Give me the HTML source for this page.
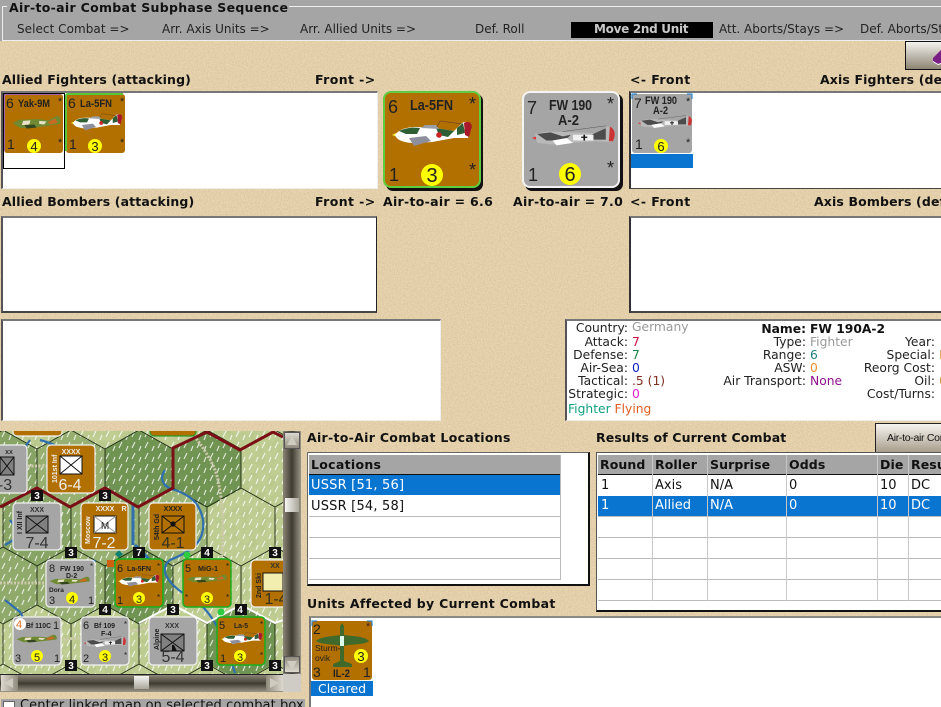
<!DOCTYPE html>
<html><head><meta charset="utf-8"><style>
html{margin:0;padding:0;background:#e3cfaa;width:941px;height:707px;overflow:hidden}
body{margin:0;padding:0;width:941px;height:707px;position:relative;overflow:hidden;font:12px "DejaVu Sans","Liberation Sans",sans-serif;color:#111}
.a{position:absolute;white-space:nowrap}
.h{position:absolute;white-space:nowrap;font:bold 12.5px/16px "DejaVu Sans",sans-serif;color:#111;letter-spacing:.13px}
.s{position:absolute;white-space:nowrap;font:12px/16px "DejaVu Sans",sans-serif;color:#222;top:21px}
.box{position:absolute;background:#fff;box-sizing:border-box;border:1px solid #eee;border-top:2px solid #777;border-left:2px solid #555}
.i{position:absolute;white-space:nowrap;font:12.3px/13px "DejaVu Sans",sans-serif;color:#222}
.r{text-align:right}
.t{position:absolute;background:#fff;overflow:hidden}
.t b,.t i{position:absolute;font:normal 13px/20px "DejaVu Sans",sans-serif;white-space:nowrap}
.t b{font:bold 12.5px/20px "DejaVu Sans",sans-serif;color:#111;letter-spacing:.1px}
svg{position:absolute;overflow:hidden}
svg text{font-family:"Liberation Sans",sans-serif}
</style></head><body>
<svg style="left:0;top:0" width="941" height="707"><filter id="n" x="0" y="0" width="100%" height="100%"><feTurbulence type="fractalNoise" baseFrequency=".7" numOctaves="3" seed="4"/><feColorMatrix values="0 0 0 0 .45  0 0 0 0 .33  0 0 0 0 .15  1.8 0 0 0 -.65"/></filter><rect width="941" height="707" fill="#e8d5b1"/><rect width="941" height="707" filter="url(#n)" opacity=".35"/>
<defs>
<symbol id="la" viewBox="0 0 81 27" preserveAspectRatio="none"><path d="M0 15l4-2 1 4z" fill="#ee3"/><path d="M3 15C7 9 15 7 25 7L44 8 62 11 70 3C76 0 81 3 79 10L76 18 62 18 40 22 20 23C10 22 5 20 3 15Z" fill="#fff"/><path d="M7 11C14 8 20 7 28 8L25 14 14 14ZM44 8L62 11 56 17 47 15ZM65 8L71 3 73 13 65 15Z" fill="#2f5f34"/><path d="M72 3C76 0 82 3 79 10L77 17 73 15Z" fill="#a8182a"/><path d="M29 8L33 5 44 5 47 9Z" fill="#9aa0a8"/><path d="M17 18L34 16 39 21 22 26Z" fill="#8d8f9c"/><circle cx="47" cy="15" r="2.8" fill="#c22"/><path d="M45 7L48 1 70 4" fill="none" stroke="#533" stroke-width=".5"/></symbol>
<symbol id="fw" viewBox="0 0 81 27" preserveAspectRatio="none"><path d="M0 16l4-2v4z" fill="#d33"/><path d="M3 11L15 8 42 9 62 10 74 2C79 2 81 8 80 15L78 21 62 20 40 22 20 24 5 22Z" fill="#b9b9b9"/><path d="M5 11L18 9 30 14 38 12 32 19 14 19ZM58 12L72 4 72 18 60 18Z" fill="#4c4c4c"/><path d="M20 19L34 16 40 22 24 25Z" fill="#fff"/><path d="M40 12H60V19H40Z" fill="#f0f0f0"/><path d="M51 12v7M48 15h6" stroke="#111" stroke-width="1.6"/><path d="M76 2C81 5 82 12 79 20L75 20Z" fill="#c33"/><path d="M30 8L72 1" stroke="#444" stroke-width=".5"/></symbol>
<symbol id="mig" viewBox="0 0 81 27" preserveAspectRatio="none"><path d="M1 14L12 8 42 7 60 9 72 2C77 1 80 8 78 15L60 18 34 22 14 22Z" fill="#6f8a32"/><path d="M18 10L30 9 28 16 16 17ZM44 10L56 11 52 16 44 15Z" fill="#e9e2c8"/><path d="M58 12L70 6 74 13 62 16Z" fill="#ca6a22"/><path d="M20 17L36 16 40 21 24 23Z" fill="#35461f"/></symbol>
<path id="hx" d="M-34-20L0-39 34-20V20L0 39-34 20Z"/>
<pattern id="tick" width="13" height="11" patternUnits="userSpaceOnUse"><path d="M2 8l3-6M9 11l2-5" stroke="#fff" stroke-width="1.1" opacity=".8"/></pattern>
<pattern id="hex" x="3" y="488" width="68" height="117" patternUnits="userSpaceOnUse"><path d="M0 19L34 0 68 19M0 19V59M68 19V59M0 59L34 78 68 59M34 78V117" fill="none" stroke="#1e2a14" stroke-width=".9"/></pattern>
<filter id="m" x="0" y="0" width="100%" height="100%"><feTurbulence type="fractalNoise" baseFrequency=".12" numOctaves="3" seed="9"/><feColorMatrix values="0 0 0 0 .25  0 0 0 0 .38  0 0 0 0 .1  1.2 0 0 0 -.45"/></filter>
</defs></svg>

<!-- top bar -->
<div class="a" style="left:0;top:0;width:941px;height:41px;background:#a5a5a5"></div>
<div class="a" style="left:2px;top:6px;width:939px;height:33px;border:1px solid #eee;border-right:0;box-sizing:content-box"></div>
<div class="a" style="left:7px;top:0;height:13px;width:282px;background:#a5a5a5"></div>
<div class="h" style="left:9px;top:0;letter-spacing:.3px">Air-to-air Combat Subphase Sequence</div>
<div class="s" style="left:17px;letter-spacing:.05px">Select Combat =&gt;</div>
<div class="s" style="left:162px">Arr. Axis Units =&gt;</div>
<div class="s" style="left:300px">Arr. Allied Units =&gt;</div>
<div class="s" style="left:475px">Def. Roll</div>
<div class="a" style="left:571px;top:22px;width:142px;height:16px;background:#000"></div>
<div class="s" style="left:594px;font-weight:bold;color:#c8c8c8;letter-spacing:-.3px">Move 2nd Unit</div>
<div class="s" style="left:719px">Att. Aborts/Stays =&gt;</div>
<div class="s" style="left:860px;width:81px;overflow:hidden">Def. Aborts/Stays</div>

<!-- top right button -->
<div class="a" style="left:905px;top:41px;width:36px;height:29px;box-sizing:border-box;background:linear-gradient(#f4f2ee,#8d8473);border:1px solid #111;border-right:0;overflow:hidden"><svg style="left:27px;top:7px" width="8" height="16"><path d="M0 9L8 1 14 4V12L5 15 0 12Z" fill="#7a1f86"/><path d="M0 12L5 15 14 12V13L5 16 0 13Z" fill="#fff"/></svg></div>

<!-- labels -->
<div class="h" style="left:2px;top:72px">Allied Fighters (attacking)</div>
<div class="h" style="left:315px;top:72px;letter-spacing:.4px">Front -&gt;</div>
<div class="h" style="left:630px;top:72px;letter-spacing:.4px">&lt;- Front</div>
<div class="h" style="left:820px;top:72px;width:121px;overflow:hidden">Axis Fighters (defending)</div>
<div class="h" style="left:2px;top:194px">Allied Bombers (attacking)</div>
<div class="h" style="left:315px;top:194px;letter-spacing:.4px">Front -&gt;</div>
<div class="h" style="left:383px;top:194px;letter-spacing:.3px">Air-to-air = 6.6</div>
<div class="h" style="left:513px;top:194px;letter-spacing:.3px">Air-to-air = 7.0</div>
<div class="h" style="left:630px;top:194px;letter-spacing:.4px">&lt;- Front</div>
<div class="h" style="left:814px;top:194px;width:127px;overflow:hidden">Axis Bombers (defending)</div>
<div class="h" style="left:307px;top:430px;letter-spacing:.3px">Air-to-Air Combat Locations</div>
<div class="h" style="left:596px;top:430px">Results of Current Combat</div>
<div class="h" style="left:307px;top:596px;letter-spacing:.3px">Units Affected by Current Combat</div>

<!-- boxes -->
<div class="box" style="left:1px;top:91px;width:377px;height:98px"></div>
<div class="box" style="left:629px;top:91px;width:312px;height:98px;border-bottom:1px solid #444;border-left:2px solid #333;border-right:0"></div>
<div class="box" style="left:1px;top:216px;width:376px;height:97px;border-right:1px solid #222;border-bottom:2px solid #444"></div>
<div class="box" style="left:629px;top:216px;width:312px;height:97px;border-bottom:2px solid #444;border-left:2px solid #333;border-right:0"></div>
<div class="box" style="left:1px;top:319px;width:440px;height:102px"></div>
<div class="box" style="left:565px;top:319px;width:376px;height:102px;border-right:0"></div>

<!-- small counter: Yak -->
<svg style="left:3px;top:93px" width="61" height="61" viewBox="0 0 61 61"><rect x="1" y="1" width="59" height="59" rx="3" fill="#b27000"/><path d="M1 58V3Q1 1 3 1H58" fill="none" stroke="#a860b0" stroke-width="2"/><text x="3" y="15" font-size="14" fill="#222">6</text><text x="15" y="14" font-size="11" font-weight="bold" textLength="32" lengthAdjust="spacingAndGlyphs" fill="#222">Yak-9M</text><text x="55" y="12" font-size="11" fill="#222">*</text><text x="55" y="53" font-size="11" fill="#222">*</text><text x="4" y="56" font-size="14" fill="#222">1</text><circle cx="31" cy="53" r="7" fill="#ff0"/><text x="31" y="58" font-size="13" text-anchor="middle" fill="#222">4</text><use href="#mig" x="9" y="22" width="50" height="16"/></svg>
<div class="a" style="left:3px;top:93px;width:60px;height:74px;border:1px solid #000;box-sizing:content-box"></div>
<!-- small La-5FN -->
<svg style="left:65px;top:93px" width="61" height="61" viewBox="0 0 61 61"><rect x="1" y="1" width="59" height="59" rx="3" fill="#b27000"/><path d="M1 58V3Q1 1 3 1H58" fill="none" stroke="#58c838" stroke-width="2"/><text x="3" y="15" font-size="14" fill="#222">6</text><text x="15" y="14" font-size="11" font-weight="bold" textLength="32" lengthAdjust="spacingAndGlyphs" fill="#222">La-5FN</text><text x="55" y="12" font-size="11" fill="#222">*</text><text x="55" y="53" font-size="11" fill="#222">*</text><text x="4" y="56" font-size="14" fill="#222">1</text><circle cx="30" cy="53" r="7" fill="#ff0"/><text x="30" y="58" font-size="13" text-anchor="middle" fill="#222">3</text><use href="#la" x="6" y="20" width="52" height="18"/></svg>

<!-- big La-5FN -->
<svg style="left:383px;top:91px" width="101" height="101" viewBox="0 0 101 101"><rect x="3" y="3" width="97" height="97" rx="7" fill="#111"/><rect x="1" y="1" width="96" height="95" rx="7" fill="#b27000" stroke="#62cc40" stroke-width="2"/><text x="5" y="22" font-size="18" fill="#222">6</text><text x="27" y="19" font-size="15" font-weight="bold" textLength="43" lengthAdjust="spacingAndGlyphs" fill="#222">La-5FN</text><text x="86" y="19" font-size="18" fill="#222">*</text><text x="86" y="85" font-size="18" fill="#222">*</text><text x="6" y="90" font-size="18" fill="#222">1</text><circle cx="49" cy="84" r="11" fill="#ff0"/><text x="49" y="91" font-size="20" text-anchor="middle" fill="#222">3</text><use href="#la" x="9" y="29" width="81" height="27"/></svg>
<!-- big FW -->
<svg style="left:521px;top:90px" width="103" height="102" viewBox="0 0 103 102"><rect x="4" y="4" width="98" height="97" rx="7" fill="#111"/><rect x="2" y="2" width="96" height="95" rx="7" fill="#a5a5a5" stroke="#f4f4f4" stroke-width="2"/><text x="6" y="24" font-size="18" fill="#222">7</text><text x="28" y="20" font-size="15" font-weight="bold" textLength="43" lengthAdjust="spacingAndGlyphs" fill="#222">FW 190</text><text x="37" y="35" font-size="15" font-weight="bold" textLength="21" lengthAdjust="spacingAndGlyphs" fill="#222">A-2</text><text x="86" y="20" font-size="18" fill="#222">*</text><text x="86" y="84" font-size="18" fill="#222">*</text><text x="7" y="91" font-size="18" fill="#222">1</text><circle cx="49" cy="84" r="11" fill="#ff0"/><text x="49" y="91" font-size="20" text-anchor="middle" fill="#222">6</text><use href="#fw" x="11" y="35" width="83" height="22"/></svg>
<!-- small FW -->
<div class="a" style="left:631px;top:153px;width:62px;height:15px;background:#0a75d1"></div>
<svg style="left:631px;top:93px" width="62" height="61" viewBox="0 0 62 61"><rect width="62" height="61" fill="#fff"/><rect x="1" y="1" width="60" height="59" rx="3" fill="#a5a5a5"/><path d="M1 6V1H6M56 1H61V6" fill="none" stroke="#0a75d1"/><text x="3" y="15" font-size="14" fill="#222">7</text><text x="14" y="11" font-size="11" font-weight="bold" textLength="32" lengthAdjust="spacingAndGlyphs" fill="#222">FW 190</text><text x="22" y="21" font-size="11" font-weight="bold" textLength="15" lengthAdjust="spacingAndGlyphs" fill="#222">A-2</text><text x="55" y="12" font-size="11" fill="#222">*</text><text x="55" y="53" font-size="11" fill="#222">*</text><text x="4" y="56" font-size="14" fill="#222">1</text><circle cx="30" cy="53" r="7" fill="#ff0"/><text x="30" y="58" font-size="13" text-anchor="middle" fill="#222">6</text><use href="#fw" x="7" y="22" width="54" height="14"/></svg>

<!-- info panel -->
<div class="i r" style="left:565px;width:63px;top:322px">Country:</div><div class="i" style="left:632px;top:321px;color:#999">Germany</div>
<div class="i r" style="left:565px;width:63px;top:336px">Attack:</div><div class="i" style="left:632px;top:336px;color:#d01040">7</div>
<div class="i r" style="left:565px;width:63px;top:349px">Defense:</div><div class="i" style="left:632px;top:349px;color:#208040">7</div>
<div class="i r" style="left:565px;width:63px;top:362px">Air-Sea:</div><div class="i" style="left:632px;top:362px;color:#1020c0">0</div>
<div class="i r" style="left:565px;width:63px;top:375px">Tactical:</div><div class="i" style="left:632px;top:375px;color:#803020">.5 (1)</div>
<div class="i r" style="left:565px;width:63px;top:388px">Strategic:</div><div class="i" style="left:632px;top:388px;color:#e020d0">0</div>
<div class="i" style="left:568px;top:403px;color:#10a080">Fighter <span style="color:#e06020">Flying</span></div>
<div class="i r" style="left:700px;width:106px;top:323px;font-weight:bold;color:#111">Name:</div><div class="i" style="left:810px;top:323px;font-weight:bold;color:#111">FW 190A-2</div>
<div class="i r" style="left:700px;width:106px;top:336px">Type:</div><div class="i" style="left:810px;top:336px;color:#999">Fighter</div>
<div class="i r" style="left:700px;width:106px;top:349px">Range:</div><div class="i" style="left:810px;top:349px;color:#208080">6</div>
<div class="i r" style="left:700px;width:106px;top:362px">ASW:</div><div class="i" style="left:810px;top:362px;color:#f09030">0</div>
<div class="i r" style="left:700px;width:106px;top:375px">Air Transport:</div><div class="i" style="left:810px;top:375px;color:#901090">None</div>
<div class="i r" style="left:840px;width:95px;top:336px">Year:</div>
<div class="i r" style="left:840px;width:95px;top:349px">Special:</div><div class="i" style="left:939px;width:2px;overflow:hidden;top:349px;color:#d0a040">I</div>
<div class="i r" style="left:840px;width:95px;top:362px">Reorg Cost:</div>
<div class="i r" style="left:840px;width:95px;top:375px">Oil:</div><div class="i" style="left:939px;width:2px;overflow:hidden;top:375px;color:#d0a040">0</div>
<div class="i r" style="left:840px;width:95px;top:388px">Cost/Turns:</div>

<!-- air-to-air button -->
<div class="a" style="left:875px;top:423px;width:66px;height:29px;box-sizing:border-box;border:1px solid #222;border-bottom:0;border-right:0;background:linear-gradient(#f6f4f0,#a89e8c);font:10.5px/28px 'Liberation Sans',sans-serif;padding-left:11px;letter-spacing:-.3px;overflow:hidden">Air-to-air Combat</div>

<!-- locations -->
<div class="a" style="left:307px;top:452px;width:283px;height:134px;box-sizing:border-box;background:#fff;border:1px solid #666;border-right:2px solid #111;border-bottom:2px solid #111"></div>
<div class="t" style="left:309px;top:455px;width:251px;height:125px;border-right:1px solid #bbb">
<div class="a" style="left:0;top:0;width:251px;height:19px;background:#a5a5a5;border-bottom:1px solid #111"></div>
<div class="a" style="left:0;top:20px;width:251px;height:20px;background:#0a75d1"></div>
<div class="a" style="left:0;top:61px;width:251px;height:1px;background:#bbb"></div>
<div class="a" style="left:0;top:82px;width:251px;height:1px;background:#bbb"></div>
<div class="a" style="left:0;top:103px;width:251px;height:1px;background:#bbb"></div>
<div class="a" style="left:0;top:124px;width:251px;height:1px;background:#bbb"></div>
<b style="left:2px;top:0;letter-spacing:.3px">Locations</b><i style="left:2px;top:21px;color:#fff;letter-spacing:.2px">USSR [51, 56]</i><i style="left:2px;top:42px;color:#111;letter-spacing:.2px">USSR [54, 58]</i></div>

<!-- results -->
<div class="a" style="left:596px;top:452px;width:345px;height:160px;box-sizing:border-box;background:#fff;border:1px solid #555;border-right:0;border-bottom:2px solid #111"></div>
<div class="t" style="left:598px;top:455px;width:343px;height:146px">
<div class="a" style="left:0;top:0;width:343px;height:19px;background:#a5a5a5;border-bottom:1px solid #111"></div>
<div class="a" style="left:0;top:41px;width:343px;height:20px;background:#0a75d1"></div>
<div class="a" style="left:0;top:61px;width:343px;height:1px;background:#bbb"></div>
<div class="a" style="left:0;top:82px;width:343px;height:1px;background:#bbb"></div>
<div class="a" style="left:0;top:103px;width:343px;height:1px;background:#bbb"></div>
<div class="a" style="left:0;top:124px;width:343px;height:1px;background:#bbb"></div>
<div class="a" style="left:0;top:145px;width:343px;height:1px;background:#bbb"></div>
<div class="a" style="left:54px;top:0;width:1px;height:146px;background:#c8c8c8"></div>
<div class="a" style="left:109px;top:0;width:1px;height:146px;background:#c8c8c8"></div>
<div class="a" style="left:188px;top:0;width:1px;height:146px;background:#c8c8c8"></div>
<div class="a" style="left:279px;top:0;width:1px;height:146px;background:#c8c8c8"></div>
<div class="a" style="left:310px;top:0;width:1px;height:146px;background:#c8c8c8"></div>
<b style="left:2px;top:0">Round</b><b style="left:57px;top:0">Roller</b><b style="left:112px;top:0">Surprise</b><b style="left:191px;top:0">Odds</b><b style="left:282px;top:0">Die</b><b style="left:313px;top:0">Result</b>
<i style="left:3px;top:21px">1</i><i style="left:57px;top:21px">Axis</i><i style="left:112px;top:21px">N/A</i><i style="left:191px;top:21px">0</i><i style="left:282px;top:21px">10</i><i style="left:313px;top:21px">DC</i>
<i style="left:3px;top:41px;color:#fff">1</i><i style="left:57px;top:41px;color:#fff">Allied</i><i style="left:112px;top:41px;color:#fff">N/A</i><i style="left:191px;top:41px;color:#fff">0</i><i style="left:282px;top:41px;color:#fff">10</i><i style="left:313px;top:41px;color:#fff">DC</i></div>

<!-- units affected -->
<div class="a" style="left:309px;top:616px;width:632px;height:91px;background:#fff;border-top:2px solid #8c8a84;border-left:2px solid #777;box-sizing:border-box"></div>
<div class="a" style="left:311px;top:681px;width:62px;height:15px;background:#0a75d1;color:#fff;font:12.5px/15px 'DejaVu Sans',sans-serif;text-align:center">Cleared</div>
<svg style="left:311px;top:620px" width="62" height="61" viewBox="0 0 62 61"><rect width="62" height="61" fill="#fff"/><rect x="1" y="1" width="60" height="59" rx="3" fill="#b27000"/><path d="M1 6V1H6M56 1H61V6" fill="none" stroke="#0a75d1"/><path d="M5 21C10 16 26 16 29 15V6L31 3 33 6V15C38 16 54 16 58 21 54 25 38 24 33 26V41L41 44V47H22V44L29 41V26C26 24 10 25 5 21Z" fill="#3f6a2c"/><path d="M29 16h4v10h-4z" fill="#dfe"/><text x="2" y="14" font-size="14" fill="#222">2</text><text x="55" y="10" font-size="11" fill="#422">*</text><text x="4" y="31" font-size="8.5" fill="#222">Sturm-</text><text x="4" y="41" font-size="8.5" fill="#222">ovik</text><circle cx="50" cy="36" r="7" fill="#ff0"/><text x="50" y="41" font-size="13" text-anchor="middle" fill="#222">3</text><text x="2" y="57" font-size="14" fill="#222">3</text><text x="22" y="57" font-size="11" font-weight="bold" textLength="17" lengthAdjust="spacingAndGlyphs" fill="#222">IL-2</text><text x="52" y="57" font-size="14" fill="#222">1</text></svg>

<!-- map -->
<svg style="left:0;top:431px" width="283" height="243" viewBox="0 431 283 243">
<rect x="0" y="431" width="283" height="243" fill="#c0ce94"/>
<g fill="#6f9352"><use href="#hx" transform="translate(207,469)"/><use href="#hx" transform="translate(139,469)"/><use href="#hx" transform="translate(3,469)" opacity=".7"/><use href="#hx" transform="translate(3,585)" opacity=".6"/><use href="#hx" transform="translate(37,527)" opacity=".7"/><use href="#hx" transform="translate(71,585)" opacity=".5"/><use href="#hx" transform="translate(241,643)"/><use href="#hx" transform="translate(139,585)"/><use href="#hx" transform="translate(173,527)" opacity=".4"/><use href="#hx" transform="translate(105,527)" opacity=".5"/><use href="#hx" transform="translate(71,469)" opacity=".5"/></g>
<rect x="0" y="431" width="283" height="243" filter="url(#m)" opacity=".3"/>
<rect x="0" y="431" width="283" height="243" fill="url(#tick)"/>
<rect x="0" y="431" width="283" height="243" fill="url(#hex)"/>
<g fill="none" stroke="#2f6fb0" stroke-width="2.2"><path d="M40 440C60 445 70 455 84 456M165 470C158 480 165 488 175 490 190 495 200 503 203 520 205 540 195 550 170 560 155 572 175 590 195 600 215 615 225 640 235 673"/><path d="M133 503V545M135 545L150 560" stroke-width="3"/><path d="M5 600L20 612 30 630M10 520L22 535 5 545M95 560L85 575M30 440L15 460 25 480"/></g>
<g fill="none" stroke="#cfc9ad" stroke-width="3" stroke-dasharray="2 1.5"><path d="M192 433C205 450 215 465 218 480 222 500 225 525 221 560M0 583H50M60 640L140 630 175 615M28 466H60"/></g>
<path d="M0 507L37 488 70 507 105 488 138 507 173 488V448L207 432 240 450 273 432 283 437" fill="none" stroke="#7a1016" stroke-width="3"/>
<path d="M139 623L173 605 207 623 241 605 275 623 283 620" fill="none" stroke="#fff" stroke-width="2"/>
<g fill="#111"><rect x="31" y="490" width="12" height="11"/><rect x="99" y="490" width="12" height="11"/><rect x="65" y="547" width="12" height="11"/><rect x="133" y="547" width="12" height="11"/><rect x="201" y="547" width="12" height="11"/><rect x="269" y="547" width="12" height="11"/><rect x="99" y="604" width="12" height="11"/><rect x="167" y="604" width="12" height="11"/><rect x="235" y="604" width="12" height="11"/><rect x="65" y="660" width="12" height="11"/><rect x="201" y="660" width="12" height="11"/><rect x="269" y="660" width="12" height="11"/></g>
<g font-size="10" font-weight="bold" fill="#fff" text-anchor="middle"><text x="37" y="499">3</text><text x="105" y="499">3</text><text x="71" y="556">3</text><text x="139" y="556">7</text><text x="207" y="556">4</text><text x="275" y="556">3</text><text x="105" y="613">4</text><text x="173" y="613">3</text><text x="240" y="613">4</text><text x="71" y="669">3</text><text x="207" y="669">3</text><text x="275" y="669">3</text></g>
<path d="M119 550l4 4-4 4-4-4z" fill="#108070"/><circle cx="187" cy="555" r="3.5" fill="#2ecc40"/><circle cx="221" cy="612" r="3.5" fill="#2ecc40"/><rect x="107" y="560" width="7" height="7" fill="#d06010"/>
<g stroke="#f2f2f2" stroke-width="1.2"><rect x="13" y="420" width="49" height="16" rx="4" fill="#b27000"/><rect x="150" y="420" width="46" height="16" rx="4" fill="#b27000" stroke="#2a9a2a"/><rect x="-20" y="445" width="47" height="48" rx="4" fill="#a5a5a5"/><rect x="47" y="445" width="48" height="48" rx="4" fill="#b27000"/><rect x="13" y="503" width="48" height="47" rx="4" fill="#a5a5a5"/><rect x="81" y="503" width="47" height="47" rx="4" fill="#b27000"/><rect x="149" y="503" width="47" height="47" rx="4" fill="#b27000"/><rect x="46" y="560" width="49" height="47" rx="4" fill="#a5a5a5"/><rect x="115" y="559" width="48" height="48" rx="4" fill="#b27000" stroke="#18b020" stroke-width="1.5"/><rect x="183" y="559" width="48" height="48" rx="4" fill="#b27000" stroke="#18b020" stroke-width="1.5"/><rect x="251" y="560" width="48" height="47" rx="4" fill="#b27000"/><rect x="13" y="617" width="48" height="48" rx="4" fill="#a5a5a5"/><rect x="81" y="617" width="48" height="48" rx="4" fill="#a5a5a5"/><rect x="149" y="617" width="48" height="48" rx="4" fill="#a5a5a5"/><rect x="217" y="617" width="48" height="48" rx="4" fill="#b27000" stroke="#18b020" stroke-width="1.5"/></g>
<!-- unit boxes -->
<g stroke="#111" stroke-width="1"><rect x="0" y="457" width="14" height="18" fill="#808080"/><path d="M0 457L14 475M14 457L0 475" fill="none"/><rect x="60" y="456" width="22" height="18" fill="#fff"/><path d="M60 456L82 474M82 456L60 474" fill="none"/><rect x="26" y="516" width="22" height="17" fill="#808080"/><path d="M26 516L48 533M48 516L26 533" fill="none"/><rect x="94" y="516" width="22" height="17" fill="#fff"/><path d="M94 516L116 533M116 516L94 533" fill="none" stroke="#999"/><rect x="162" y="516" width="22" height="17" fill="#b27000"/><path d="M162 516L184 533M184 516L162 533" fill="none"/><rect x="161" y="634" width="23" height="17" fill="#808080"/><path d="M161 634L184 651M184 634L161 651" fill="none"/><rect x="263" y="573" width="20" height="18" fill="#f2eeb0"/></g>
<circle cx="173" cy="524" r="2.6" fill="#111"/><path d="M172 651l0-6h2l3 6z" fill="#111"/>
<g fill="#eee" font-size="7" font-weight="bold" text-anchor="middle"><text x="9" y="454" fill="#333">xx</text><text x="71" y="454">XXXX</text><text x="37" y="512" fill="#333">XXX</text><text x="105" y="511">XXXX</text><text x="173" y="511" fill="#222">XXXX</text><text x="172" y="628" fill="#333">XXX</text><text x="275" y="568" fill="#333">XX</text></g>
<text x="124" y="511" font-size="7" font-weight="bold" fill="#eee" text-anchor="middle">R</text>
<text x="105" y="529" font-size="10" fill="#222" text-anchor="middle">M</text>
<g font-size="16" text-anchor="middle"><text x="5" y="490" fill="#333">-3</text><text x="70" y="490" fill="#eee">6-4</text><text x="37" y="548" fill="#333">7-4</text><text x="104" y="548" fill="#eee">7-2</text><text x="173" y="548" fill="#332">4-1</text><text x="276" y="604" fill="#332">1-4</text><text x="173" y="662" fill="#333">5-4</text></g>
<g font-size="7" font-weight="bold" fill="#222"><text transform="translate(57,483) rotate(-90)" fill="#eee">101st Inf</text><text transform="translate(22,534) rotate(-90)">I XII Inf</text><text transform="translate(90,544) rotate(-90)" fill="#eee">Moscow</text><text transform="translate(159,540) rotate(-90)">54th Gd</text><text transform="translate(261,598) rotate(-90)">2nd Ski</text><text transform="translate(159,650) rotate(-90)">Alpine</text></g>
<!-- air counters on map -->
<g fill="#222"><text x="49" y="572" font-size="11">8</text><text x="60" y="571" font-size="7.5" font-weight="bold" textLength="24" lengthAdjust="spacingAndGlyphs">FW 190</text><text x="66" y="578" font-size="7" font-weight="bold">D-2</text><text x="90" y="569" font-size="8">*</text><text x="49" y="592" font-size="6.5" font-weight="bold">Dora</text><text x="49" y="604" font-size="11">3</text><circle cx="72" cy="598" r="6" fill="#ff0"/><text x="72" y="603" font-size="11" text-anchor="middle">4</text><text x="88" y="604" font-size="11">1</text>
<text x="117" y="572" font-size="11">6</text><text x="127" y="571" font-size="7.5" font-weight="bold" textLength="24" lengthAdjust="spacingAndGlyphs">La-5FN</text><text x="157" y="569" font-size="8">*</text><text x="117" y="604" font-size="11">1</text><circle cx="139" cy="598" r="6" fill="#ff0"/><text x="139" y="603" font-size="11" text-anchor="middle">3</text><text x="157" y="600" font-size="8">*</text>
<text x="185" y="572" font-size="11">5</text><text x="198" y="571" font-size="7.5" font-weight="bold" textLength="20" lengthAdjust="spacingAndGlyphs">MiG-1</text><text x="226" y="569" font-size="8">*</text><text x="185" y="600" font-size="8">*</text><circle cx="207" cy="598" r="6" fill="#ff0"/><text x="207" y="603" font-size="11" text-anchor="middle">3</text><text x="226" y="600" font-size="8">*</text>
<circle cx="20" cy="624" r="6" fill="#fff"/><text x="16" y="628" font-size="11" fill="#e07020">4</text><text x="26" y="628" font-size="7.5" font-weight="bold" textLength="25" lengthAdjust="spacingAndGlyphs">Bf 110C</text><text x="53" y="629" font-size="11">1</text><text x="15" y="662" font-size="11">3</text><circle cx="37" cy="656" r="6" fill="#ff0"/><text x="37" y="661" font-size="11" text-anchor="middle">5</text><text x="54" y="662" font-size="11">1</text>
<text x="83" y="629" font-size="11">6</text><text x="94" y="628" font-size="7.5" font-weight="bold" textLength="21" lengthAdjust="spacingAndGlyphs">Bf 109</text><text x="101" y="636" font-size="7" font-weight="bold">F-4</text><text x="124" y="627" font-size="8">*</text><text x="83" y="662" font-size="11">2</text><circle cx="105" cy="656" r="6" fill="#ff0"/><text x="105" y="661" font-size="11" text-anchor="middle">3</text><text x="124" y="658" font-size="8">*</text>
<text x="219" y="629" font-size="11">5</text><text x="234" y="628" font-size="7.5" font-weight="bold" textLength="14" lengthAdjust="spacingAndGlyphs">La-5</text><text x="260" y="627" font-size="8">*</text><text x="220" y="662" font-size="11">1</text><circle cx="240" cy="656" r="6" fill="#ff0"/><text x="240" y="661" font-size="11" text-anchor="middle">3</text><text x="260" y="658" font-size="8">*</text></g>
<use href="#mig" x="49" y="576" width="42" height="10"/><use href="#la" x="118" y="574" width="42" height="13"/><use href="#mig" x="186" y="574" width="42" height="10"/><use href="#mig" x="16" y="634" width="42" height="10"/><use href="#fw" x="84" y="636" width="42" height="12"/><use href="#la" x="221" y="632" width="42" height="13"/>
</svg>
<!-- scrollbars -->
<div class="a" style="left:283px;top:431px;width:18px;height:243px;background:linear-gradient(90deg,#8a8576,#403c32 50%,#9a9686)"></div>
<div class="a" style="left:284px;top:432px;width:16px;height:17px;background:linear-gradient(#ddd9cf,#8f8a7c);border:1px solid #555;box-sizing:border-box"></div>
<div class="a" style="left:284px;top:656px;width:16px;height:17px;background:linear-gradient(#8f8a7c,#ddd9cf);border:1px solid #555;box-sizing:border-box"></div>
<div class="a" style="left:285px;top:498px;width:14px;height:14px;background:linear-gradient(90deg,#f4f4f2,#a9a69a)"></div>
<svg style="left:284px;top:432px" width="16" height="241"><path d="M8 4L13 13H3Z" fill="#cfcbbf"/><path d="M8 238L13 229H3Z" fill="#cfcbbf"/></svg>
<div class="a" style="left:0;top:674px;width:283px;height:18px;background:linear-gradient(#8a8576,#403c32 50%,#9a9686);border-top:1px solid #222;box-sizing:border-box"></div>
<div class="a" style="left:1px;top:675px;width:17px;height:16px;background:linear-gradient(90deg,#ddd9cf,#8f8a7c)"></div>
<div class="a" style="left:266px;top:675px;width:17px;height:16px;background:linear-gradient(90deg,#8f8a7c,#ddd9cf)"></div>
<div class="a" style="left:134px;top:676px;width:15px;height:13px;background:linear-gradient(#f4f4f2,#a9a69a)"></div>
<div class="a" style="left:283px;top:674px;width:18px;height:18px;background:#cfccc6"></div>
<svg style="left:0;top:675px" width="283" height="16"><path d="M4 8L13 3V13Z" fill="#cfcbbf"/><path d="M279 8L270 3V13Z" fill="#cfcbbf"/></svg>
<!-- checkbox -->
<div class="a" style="left:1px;top:699px;width:304px;height:8px;background:#a5a5a5;overflow:hidden"><div class="a" style="left:2px;top:2px;width:10px;height:6px;background:#fff;border:1px solid #666;border-bottom:0"></div><div class="a" style="left:19px;top:-1px;font:13px/16px 'DejaVu Sans',sans-serif;color:#111;letter-spacing:.1px">Center linked map on selected combat box</div></div>
</body></html>
